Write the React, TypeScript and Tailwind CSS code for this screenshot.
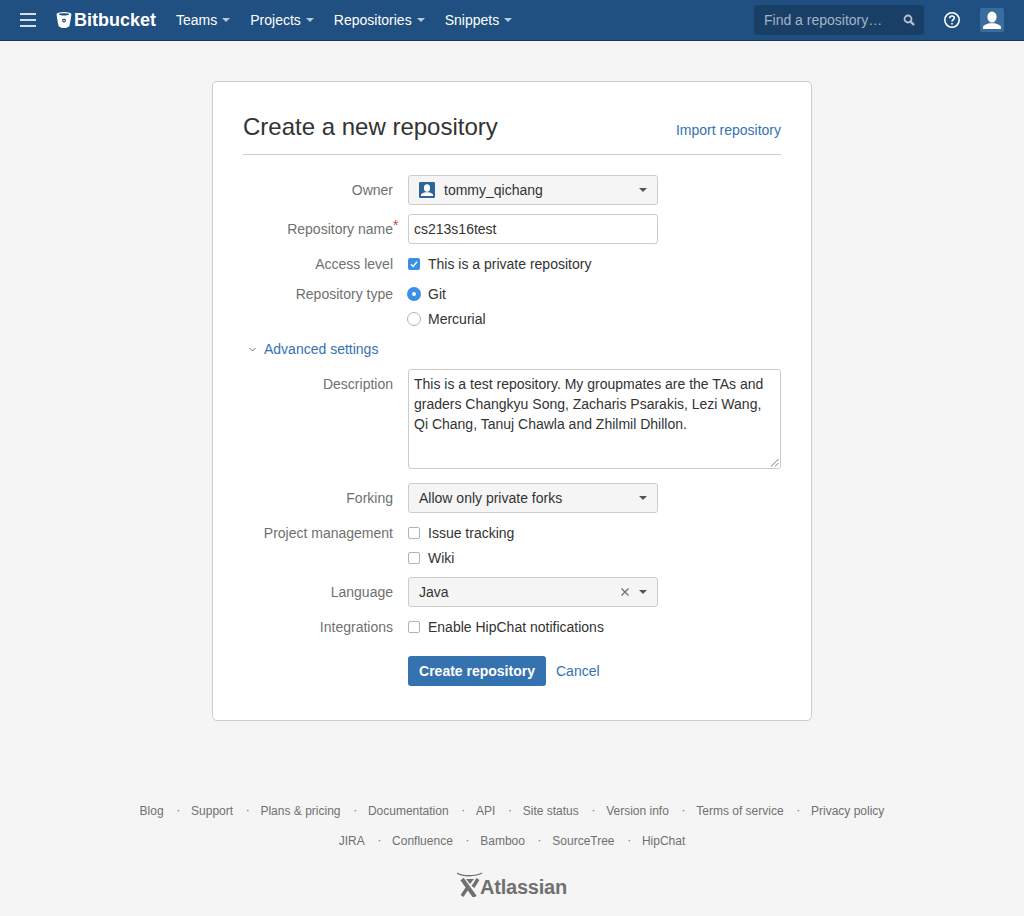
import React from "react";

const Caret = ({ className = "" }: { className?: string }) => (
  <svg width="8" height="4" viewBox="0 0 8 4" className={className} fill="currentColor"><path d="M0 0h8L4 4z" /></svg>
);

const Nav = ({ label }: { label: string }) => (
  <div className="flex items-center gap-[5px] text-white text-[14px]">
    <span>{label}</span>
    <Caret className="text-[#b8c9d9]" />
  </div>
);

const Avatar = ({ size, cls }: { size: number; cls: string }) => (
  <svg width={size} height={size} viewBox="0 0 24 24" className={cls}>
    <rect width="24" height="24" rx="2" fill="currentColor" />
    <ellipse cx="12" cy="9" rx="4.6" ry="5.6" fill="#fff" />
    <path d="M3 21v-2.2c0-1.6 4-2.8 6.2-3.6h5.6c2.2.8 6.2 2 6.2 3.6V21z" fill="#fff" />
  </svg>
);

const Row = ({ label, children, cls = "", req = false }: { label?: string; children: React.ReactNode; cls?: string; req?: boolean }) => (
  <div className={`flex items-center ${cls}`}>
    <div className="w-[150px] shrink-0 text-right text-[14px] text-[#707070] relative whitespace-nowrap">
      {label}
      {req && <span className="absolute left-full top-[-1px] text-[#d04437] text-[14px] leading-none">*</span>}
    </div>
    <div className="ml-[15px] flex-1 min-w-0">{children}</div>
  </div>
);

const Select = ({ children, clear = false }: { children: React.ReactNode; clear?: boolean }) => (
  <div className="w-[250px] h-[30px] flex items-center bg-[#f5f5f5] border border-[#cccccc] rounded-[3px] text-[14px] text-[#333333]">
    <div className="flex-1 flex items-center min-w-0">{children}</div>
    {clear && (
      <svg width="8" height="8" viewBox="0 0 8 8" className="mr-[10px]" stroke="#707070" strokeWidth="1.300"><path d="M.5.5l7 7M7.500.5l-7 7" /></svg>
    )}
    <Caret className="text-[#555555] mr-[10px]" />
  </div>
);

const Check = ({ checked = false, label, boxCls = "top-[-1px]" }: { checked?: boolean; label: string; boxCls?: string }) => (
  <div className="flex items-center h-[20px] text-[14px] text-[#333333]">
    {checked ? (
      <svg width="12" height="12" viewBox="0 0 12 12" className={`shrink-0 relative ${boxCls}`}>
        <rect width="12" height="12" rx="2" fill="#3b8fe6" />
        <path d="M3 6.200l2.100 2.200L9 3.800" stroke="#fff" strokeWidth="1.500" fill="none" />
      </svg>
    ) : (
      <span className={`w-[12px] h-[12px] shrink-0 rounded-[2px] border border-[#b3b3b3] bg-white relative ${boxCls}`} />
    )}
    <span className="ml-[8px]">{label}</span>
  </div>
);

const Footer = ({ items }: { items: string[] }) => (
  <div className="flex justify-center items-center text-[12px] text-[#707070] h-[20px]">
    {items.map((t, i) => (
      <React.Fragment key={t}>
        {i > 0 && <span className="w-[27.4px] pl-[2px] text-center relative top-[-1px]">·</span>}
        <span>{t}</span>
      </React.Fragment>
    ))}
  </div>
);

export default function App() {
  return (
    <div className="min-h-[916px] bg-[#f5f5f5] font-['Liberation_Sans',Arial,sans-serif] flex flex-col">
      <header className="h-[41px] bg-[#205081] border-b border-[#153a5e] flex items-center shrink-0">
        <div className="ml-[20px] w-[16px] flex flex-col gap-[4px]">
          <span className="h-[2px] bg-[#d5dfe8]" />
          <span className="h-[2px] bg-[#d5dfe8]" />
          <span className="h-[2px] bg-[#d5dfe8]" />
        </div>
        <svg width="16" height="18" viewBox="0 0 16 18" className="ml-[20px]" fill="#fff">
          <path fillRule="evenodd" d="M8 1C4 1 .6 2 .6 3.200c0 .5 1.300 9 1.800 11.200C2.700 15.800 5.500 17 8 17s5.300-1.200 5.600-2.600c.5-2.200 1.800-10.700 1.800-11.200C15.400 2 12 1 8 1zM8 2.300c-2.900 0-5.200.4-5.200.9S5.100 4.500 8 4.500s5.200-.8 5.200-1.300S10.900 2.300 8 2.300z" />
          <circle cx="8" cy="9.500" r="2" fill="#205081" />
          <circle cx="8" cy="9.500" r="0.800" fill="#fff" />
        </svg>
        <span className="ml-[2px] text-white text-[18px] font-bold leading-none">Bitbucket</span>
        <div className="flex items-center ml-[20px] gap-[20px]">
          <Nav label="Teams" />
          <Nav label="Projects" />
          <Nav label="Repositories" />
          <Nav label="Snippets" />
        </div>
        <div className="ml-auto flex items-center">
          <div className="w-[170px] h-[30px] rounded-[3px] bg-[#1a3f66] flex items-center pl-[10px] pr-[9px] text-[14px] text-[#a3b4c5]">
            <span className="flex-1">Find a repository…</span>
            <svg width="12" height="12" viewBox="0 0 12 12" fill="none" stroke="#b4c2d0">
              <circle cx="5" cy="5" r="3.500" strokeWidth="1.800" />
              <path d="M7.500 7.500L11 11" strokeWidth="2.400" />
            </svg>
          </div>
          <svg width="18" height="18" viewBox="0 0 18 18" className="ml-[19px]" fill="none" stroke="#fff" strokeWidth="1.600">
            <circle cx="9" cy="9" r="7.200" />
            <path d="M6.700 7.200c0-1.400 1-2.200 2.300-2.200s2.300.8 2.300 2c0 1.600-2.300 1.700-2.300 3.500" />
            <circle cx="9" cy="12.800" r="0.500" fill="#fff" strokeWidth="1" />
          </svg>
          <Avatar size={24} cls="ml-[19px] mr-[20px] text-[#3b6c9e]" />
        </div>
      </header>

      <main className="w-[600px] h-[640px] mx-auto mt-[40px] bg-white border border-[#cccccc] rounded-[5px] px-[30px] shrink-0">
        <div className="h-[73px] border-b border-[#cccccc] flex justify-between relative">
          <h1 className="text-[24px] text-[#333333] leading-[30px] mt-[30px]">Create a new repository</h1>
          <a className="text-[14px] text-[#3572b0] mt-[38px] leading-[20px]">Import repository</a>
        </div>

        <Row label="Owner" cls="mt-[20px]">
          <Select>
            <Avatar size={16} cls="ml-[10px] text-[#2e6599]" />
            <span className="ml-[9px]">tommy_qichang</span>
            <span className="flex-1" />
          </Select>
        </Row>
        <Row label="Repository name" req cls="mt-[9px]">
          <div className="w-[250px] h-[30px] flex items-center bg-white border border-[#cccccc] rounded-[3px] px-[5px] text-[14px] text-[#333333]">cs213s16test</div>
        </Row>
        <Row label="Access level" cls="mt-[10px]">
          <Check checked label="This is a private repository" />
        </Row>
        <Row label="Repository type" cls="mt-[9px]">
          <div className="flex items-center h-[20px] text-[14px] text-[#333333]">
            <svg width="14" height="14" viewBox="0 0 14 14" className="shrink-0 -ml-px relative top-[-1px]"><circle cx="7" cy="7" r="7" fill="#3b8fe6" /><circle cx="7" cy="7" r="2" fill="#fff" /></svg>
            <span className="ml-[7px]">Git</span>
          </div>
        </Row>
        <Row cls="mt-[4px]">
          <div className="flex items-center h-[20px] text-[14px] text-[#333333]">
            <span className="w-[14px] h-[14px] -ml-px rounded-full border border-[#b3b3b3] bg-white shrink-0" />
            <span className="ml-[7px]">Mercurial</span>
          </div>
        </Row>
        <div className="flex items-center h-[20px] mt-[10px] text-[14px] text-[#3572b0]">
          <svg width="7" height="5" viewBox="0 0 7 5" className="ml-[6px]" fill="none" stroke="#707070" strokeWidth="1"><path d="M.5 1l3 3 3-3" /></svg>
          <span className="ml-[8px]">Advanced settings</span>
        </div>

        <div className="flex items-start mt-[10px]">
          <div className="w-[150px] shrink-0 text-right text-[14px] text-[#707070] pt-[5px] leading-[20px]">Description</div>
          <div className="ml-[15px] w-[373px] h-[100px] border border-[#cccccc] rounded-[3px] px-[5px] pt-[4px] text-[14px] leading-[20px] text-[#333333] relative">
            <p>This is a test repository. My groupmates are the TAs and graders Changkyu Song, Zacharis Psarakis, Lezi Wang, Qi Chang, Tanuj Chawla and Zhilmil Dhillon.</p>
            <svg width="9" height="9" viewBox="0 0 9 9" className="absolute right-[1px] bottom-[1px]" stroke="#777" strokeWidth="1"><path d="M1 8.500L8.500 1M5 8.500L8.500 5" /></svg>
          </div>
        </div>
        <Row label="Forking" cls="mt-[14px]">
          <Select><span className="ml-[10px]">Allow only private forks</span></Select>
        </Row>
        <Row label="Project management" cls="mt-[10px]">
          <Check label="Issue tracking" />
        </Row>
        <Row cls="mt-[4px]">
          <Check label="Wiki" boxCls="top-0" />
        </Row>
        <Row label="Language" cls="mt-[9px]">
          <Select clear><span className="ml-[10px]">Java</span></Select>
        </Row>
        <Row label="Integrations" cls="mt-[10px]">
          <Check label="Enable HipChat notifications" />
        </Row>
        <div className="flex items-center ml-[165px] mt-[18px]">
          <button className="w-[138px] h-[30px] bg-[#3572b0] rounded-[3px] text-white text-[14px] font-bold">Create repository</button>
          <a className="ml-[10px] text-[14px] text-[#3572b0]">Cancel</a>
        </div>
      </main>

      <footer className="mt-[80px]">
        <Footer items={["Blog", "Support", "Plans & pricing", "Documentation", "API", "Site status", "Version info", "Terms of service", "Privacy policy"]} />
        <div className="mt-[10px]">
          <Footer items={["JIRA", "Confluence", "Bamboo", "SourceTree", "HipChat"]} />
        </div>
        <div className="flex justify-center items-start mt-[21px] text-[#707070]">
          <svg width="26" height="25" viewBox="0 0 26 25" fill="none" stroke="#707070" className="mr-[-3px]">
            <path d="M0 1c6 3.600 18 3.600 25 0" strokeWidth="1.400" />
            <path d="M5 7l13 18" strokeWidth="4" />
            <path d="M5 24l6-9M21 7l-5 8" strokeWidth="3.400" />
            <path d="M9 7h8l-4 5z" fill="#707070" strokeWidth="0" />
          </svg>
          <span className="text-[20px] font-bold tracking-[-0.2px] leading-[23px] mt-[4px]">Atlassian</span>
        </div>
      </footer>
    </div>
  );
}
